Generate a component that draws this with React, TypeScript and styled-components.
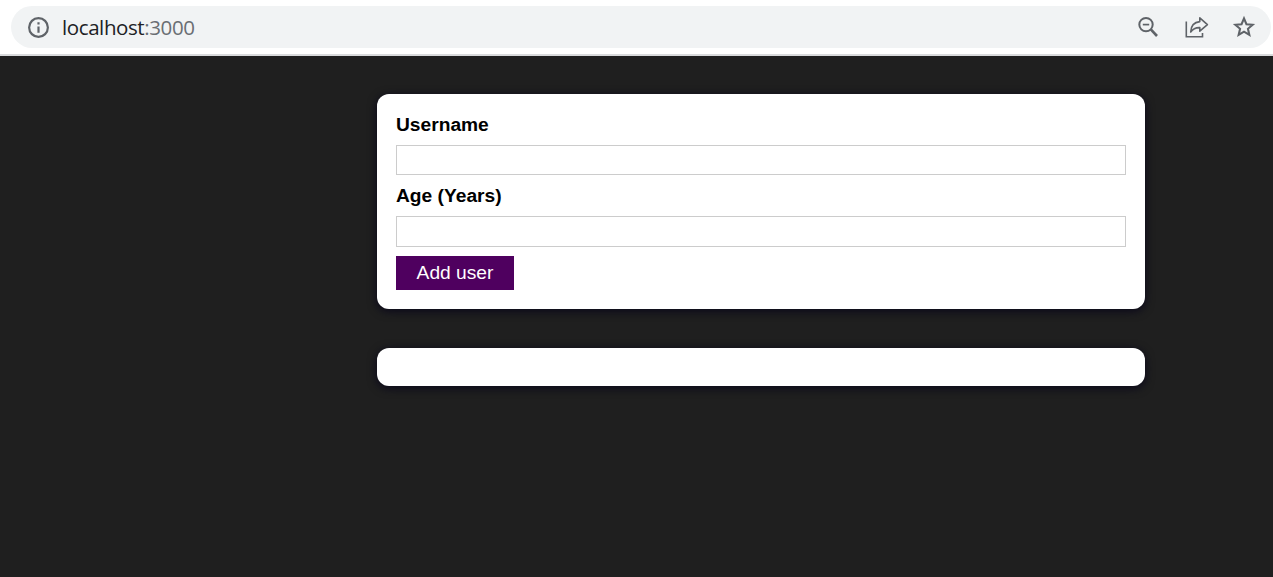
import React from "react";
import styled, { createGlobalStyle } from "styled-components";

const GlobalStyle = createGlobalStyle`
  *, *::before, *::after { box-sizing: border-box; }
  html, body { margin: 0; background: #1f1f1f; }
  body { font-family: "Liberation Sans", Arial, sans-serif; font-size: 19.2px; overflow: hidden; }
`;

const Page = styled.div`
  display: flex;
  flex-direction: column;
  height: 577px;
`;

const BrowserBar = styled.header`
  flex: none;
  height: 56px;
  padding: 6px 2px 6px 11px;
  background: #fff;
  border-bottom: 2px solid #d9dadc;
`;

const AddressField = styled.div`
  display: flex;
  align-items: center;
  height: 42px;
  padding: 0 14px 0 15px;
  border-radius: 21px;
  background: #f1f3f4;
  color: #5f6368;
  svg { flex: none; display: block; }
`;

const Address = styled.span`
  flex: 1;
  margin-left: 11px;
  padding-bottom: 1px;
  font: 400 20.5px/28px "Open Sans", "Noto Sans", sans-serif;
  letter-spacing: -0.4px;
  color: #6a6e73;
`;

const Host = styled.span`
  color: #202124;
`;

const Actions = styled.div`
  display: flex;
  align-items: center;
  gap: 22px;
`;

const Content = styled.main`
  display: flex;
  flex-direction: column;
  gap: 39px;
  width: 768px;
  margin: 38px 0 0 377px;
`;

const Card = styled.section`
  padding: 19px;
  border-radius: 12px;
  background: #fff;
  box-shadow: 0 2px 10px rgba(5, 2, 25, 0.85);
`;

const Form = styled.form`
  display: flex;
  flex-direction: column;
  align-items: flex-start;
`;

const Label = styled.label`
  height: 22px;
  margin-bottom: 10px;
  line-height: 24px;
  font-weight: 700;
  color: #000;
`;

const Input = styled.input<{ $height: number }>`
  width: 100%;
  height: ${({ $height }) => $height}px;
  margin: 0 0 9px;
  padding: 2px;
  border: 1px solid #ccc;
  border-radius: 0;
  background: #fff;
  font: inherit;
  outline: none;
`;

const Button = styled.button`
  width: 118px;
  height: 34px;
  padding: 0 0 1px;
  border: 0;
  background: #4f005f;
  color: #fff;
  font: inherit;
  line-height: 22px;
`;

const InfoIcon = () => (
  <svg width="25" height="25" viewBox="0 0 24 24" fill="none" stroke="#5f6368" strokeWidth="2.1">
    <circle cx="12" cy="12" r="9" />
    <path d="M12 11V17M12 7V9.1" />
  </svg>
);

const ZoomOutIcon = () => (
  <svg width="28" height="24" viewBox="0 0 28 24" fill="none" stroke="#5f6368" strokeWidth="2">
    <circle cx="11" cy="9.6" r="6.7" />
    <path d="M7.8 9.6H14.2" strokeWidth="1.7" />
    <path d="M15.8 14.4L22 21" strokeWidth="2.6" />
  </svg>
);

const ShareIcon = () => (
  <svg width="24" height="24" viewBox="0 0 24 24" fill="none" stroke="#5f6368" strokeWidth="1.6">
    <path d="M1.3 6.5V21.7H17.5V18" />
    <path d="M14.8 2.9L22.4 9.6L14.8 16.2V12.6C10.6 12.4 8 13.7 5.7 17C5.9 11.6 8.8 7.2 14.8 6.6Z" strokeLinejoin="round" />
  </svg>
);

const StarIcon = () => (
  <svg width="26" height="26" viewBox="0 0 24 24" fill="none" stroke="#5f6368" strokeWidth="1.9">
    <path d="M20 9.9L14.25 9.4L12 4.1L9.75 9.4L4 9.9L8.37 13.7L7.06 19.3L12 16.34L16.94 19.3L15.64 13.7Z" />
  </svg>
);

export default function App() {
  return (
    <Page>
      <GlobalStyle />
      <BrowserBar>
        <AddressField>
          <InfoIcon />
          <Address><Host>localhost</Host>:3000</Address>
          <Actions>
            <ZoomOutIcon />
            <ShareIcon />
            <StarIcon />
          </Actions>
        </AddressField>
      </BrowserBar>
      <Content>
        <Card>
          <Form onSubmit={(event) => event.preventDefault()}>
            <Label htmlFor="username">Username</Label>
            <Input id="username" type="text" $height={30} />
            <Label htmlFor="age">Age (Years)</Label>
            <Input id="age" type="number" $height={31} />
            <Button type="submit">Add user</Button>
          </Form>
        </Card>
        <Card />
      </Content>
    </Page>
  );
}
